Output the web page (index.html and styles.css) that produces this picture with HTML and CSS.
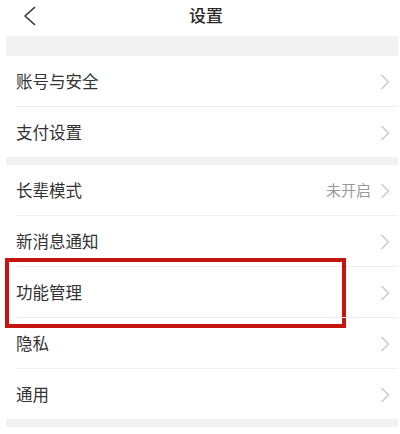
FILE: index.html
```html
<!DOCTYPE html>
<html lang="zh-CN">
<head>
<meta charset="utf-8">
<link rel="stylesheet" href="styles.css">
</head>
<body>
<header class="nav">
  <svg class="back" width="14" height="20" viewBox="0 0 14 20"><polyline points="11.5,1.5 2,10 11.5,18.5" fill="none" stroke="#333" stroke-width="1.6" stroke-linecap="round" stroke-linejoin="round"/></svg>
  <h1 class="title">设置</h1>
</header>
<main class="content">
  <div class="band band-top"></div>
  <section class="group">
    <div class="row"><span class="label">账号与安全</span><span class="arrow"><svg width="10" height="16" viewBox="0 0 10 16"><polyline points="1.5,1 8.5,8 1.5,15" fill="none" stroke="#c9c9c9" stroke-width="1.4"/></svg></span></div>
    <div class="row"><span class="label">支付设置</span><span class="arrow"><svg width="10" height="16" viewBox="0 0 10 16"><polyline points="1.5,1 8.5,8 1.5,15" fill="none" stroke="#c9c9c9" stroke-width="1.4"/></svg></span></div>
  </section>
  <div class="band"></div>
  <section class="group">
    <div class="row"><span class="label">长辈模式</span><span class="value">未开启</span><span class="arrow"><svg width="10" height="16" viewBox="0 0 10 16"><polyline points="1.5,1 8.5,8 1.5,15" fill="none" stroke="#c9c9c9" stroke-width="1.4"/></svg></span></div>
    <div class="row"><span class="label">新消息通知</span><span class="arrow"><svg width="10" height="16" viewBox="0 0 10 16"><polyline points="1.5,1 8.5,8 1.5,15" fill="none" stroke="#c9c9c9" stroke-width="1.4"/></svg></span></div>
    <div class="row highlighted"><span class="label">功能管理</span><span class="arrow"><svg width="10" height="16" viewBox="0 0 10 16"><polyline points="1.5,1 8.5,8 1.5,15" fill="none" stroke="#c9c9c9" stroke-width="1.4"/></svg></span><span class="mark"></span></div>
    <div class="row"><span class="label">隐私</span><span class="arrow"><svg width="10" height="16" viewBox="0 0 10 16"><polyline points="1.5,1 8.5,8 1.5,15" fill="none" stroke="#c9c9c9" stroke-width="1.4"/></svg></span></div>
    <div class="row"><span class="label">通用</span><span class="arrow"><svg width="10" height="16" viewBox="0 0 10 16"><polyline points="1.5,1 8.5,8 1.5,15" fill="none" stroke="#c9c9c9" stroke-width="1.4"/></svg></span></div>
  </section>
  <div class="band"></div>
</main>
</body>
</html>
```
FILE: styles.css
```css
* { box-sizing: border-box; }
html, body {
  margin: 0;
  padding: 0;
  background: #fff;
  width: 400px;
  height: 434px;
  overflow: hidden;
  font-family: "Noto Sans CJK SC", "Noto Sans", sans-serif;
  color: #333;
}
.nav {
  position: relative;
  height: 36px;
  display: flex;
  align-items: center;
  justify-content: center;
}
.back {
  position: absolute;
  left: 23px;
  top: 6px;
}
.title {
  margin: 0;
  font-size: 17px;
  font-weight: 500;
  line-height: 20px;
  margin-top: -6px;
  margin-left: 12px;
  color: #2a2a2a;
}
.content {
  margin: 0 2px 0 6px;
  background: #fff;
}
.band {
  height: 8px;
  background: #f2f2f2;
}
.band-top { height: 20px; }
.group {
  background: #fff;
}
.row {
  position: relative;
  height: 51px;
  display: flex;
  align-items: center;
  padding: 0 8px 0 10px;
  margin-top: 0;
}
.row + .row {
  border-top: 1px solid #efefef;
}
.row + .row::before { content: none; }
.group .row:first-child { height: 50px; }
.row + .row { margin-left: 10px; padding-left: 0; }
.label {
  flex: 1;
  font-size: 16.5px;
  line-height: 20px;
  color: #333;
}
.value {
  font-size: 15px;
  color: #9a9a9a;
  margin-right: 9px;
  line-height: 20px;
}
.arrow {
  display: flex;
  align-items: center;
  margin-top: 1px;
}
.mark {
  position: absolute;
  left: -11px;
  top: -9px;
  width: 341px;
  height: 70px;
  border: 4.5px solid #c4160f;
  pointer-events: none;
}
```
